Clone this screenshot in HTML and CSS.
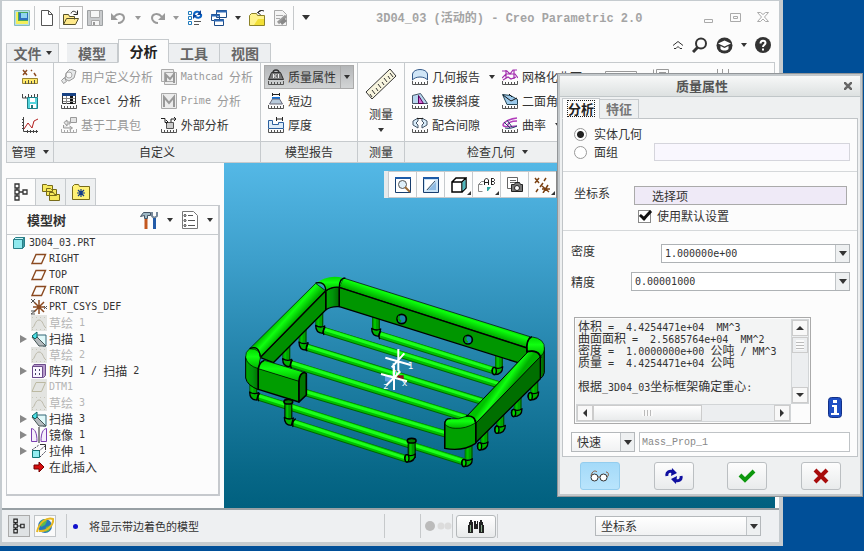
FILE: index.html
```html
<!DOCTYPE html>
<html lang="zh-CN">
<head>
<meta charset="utf-8">
<title>3D04_03 (活动的) - Creo Parametric 2.0</title>
<link rel="stylesheet" href="styles.css">
</head>
<body>
<svg class="sprite" aria-hidden="true">
  <symbol id="i-app" viewBox="0 0 16 16"><path fill="#b5dde9" stroke="#8bb" d="M.5.5h15v15H.5z"/><path fill="#f3ef5a" d="M2 2h4v8h8v4H2z"/><path fill="#4aa85a" d="M4 2h10v9H4z"/><path fill="#2f6fc0" d="M5 3h9v7H5z"/><path fill="#8fd4ee" d="M7 3h6v5H7z"/></symbol>
  <symbol id="i-new" viewBox="0 0 16 16"><path fill="#fff" stroke="#555" d="M2.500.5h7l4 4v11h-11zM9.500.5v4h4"/></symbol>
  <symbol id="i-open" viewBox="0 0 16 16"><path fill="#ffe98a" stroke="#55502a" d="M.5 14.500v-10h5l1 2h5v3M.5 14.500l3-6h12l-3 6z"/><path fill="none" stroke="#222" d="M8 3.500c1-3 4-3 6 0M14.500.5v4h-4"/></symbol>
  <symbol id="i-save" viewBox="0 0 16 16"><path fill="#c9cbcd" stroke="#9da0a2" d="M.5.5h15v15H.5z"/><path fill="#f6f6f6" stroke="#aaa" d="M3.500.5h9v7h-9zM4.500 10.500h8v5h-8z"/><path fill="#999" d="M6 12h2v3H6z"/></symbol>
  <symbol id="i-undo" viewBox="0 0 16 16"><path fill="none" stroke="#9a9a9a" stroke-width="2" d="M3 7c4-5 10-3 10 1 0 3-3 5-6 5"/><path fill="#9a9a9a" d="M0 3v7h7z"/></symbol>
  <symbol id="i-regen" viewBox="0 0 16 16"><path fill="none" stroke="#1f7bbd" d="M1.500 1.500h3v3h-3zM1.500 6.500h3v3h-3zM1.500 11.500h3v3h-3z"/><path fill="none" stroke="#0b63c4" stroke-width="2" d="M7 5c0-4 5-4 6-2M14 4c1 4-4 5-6 2"/><path fill="#0b3f94" d="M14 0v5h-4zM6 9V5h4z"/><path stroke="#555" d="M7 11.500h7M7 14.500h5"/></symbol>
  <symbol id="i-wins" viewBox="0 0 16 16"><path fill="#fff" stroke="#1d4b86" d="M5.500.5h10v7h-10zM.5 4.500h8v6h-8zM3.500 9.500h9v6h-9z"/><path stroke="#2c68b4" stroke-width="2" d="M5 1.500h11M0 5.500h9M3 10.500h10"/></symbol>
  <symbol id="i-fold" viewBox="0 0 16 16"><path fill="#fff38c" stroke="#8c8228" d="M.5 15.500V5.500l2-2h5l1 2h7v10z"/><path fill="#f2df36" d="M9 9h6v6H5z"/><path fill="none" stroke="#222" d="M9 3c1-3 3-3 6-2M12.500.5l-4 2 3 2"/></symbol>
  <symbol id="i-edit" viewBox="0 0 16 16"><path fill="#f4f4f4" stroke="#aaa" d="M1.500.5h8l4 4v11h-12z"/><path stroke="#aaa" d="M3 5.500h7M3 8.500h4"/><path stroke="#999" stroke-width="3" d="M5 13l8-7"/><path fill="#888" d="M7 12l4-4 3 3-5 4z"/></symbol>
  <symbol id="i-scale" viewBox="0 0 16 16"><path stroke="#8b4a20" stroke-width="1.500" d="M1 1l4 5M5 1L1 6M9 1l1 1M12 4l2 3"/><path fill="#ffe96a" stroke="#9a8430" d="M.5 9.500h15v5H.5z"/><path stroke="#554" d="M3.500 12v3M6.500 11v4M9.500 12v3M12.500 11v4"/></symbol>
  <symbol id="i-savea" viewBox="0 0 16 16"><path fill="none" stroke="#444" d="M.5 1v4h5M3.500 3v2"/><path stroke="#444" d="M6.500 1v3M9.500 2v2M12.500 1v3M15.500 1v3"/><path fill="#55d5dd" stroke="#1d7e86" d="M5.500 4.500h10v11h-10z"/><path fill="#fff" d="M8 5h5v4H8zM8 11h6v4H8z"/><path fill="#277" d="M9 12h2v3H9z"/></symbol>
  <symbol id="i-graph" viewBox="0 0 16 16"><path fill="none" stroke="#444" d="M1.500 0v14.500H16M0 2.500h2M0 5.500h2M0 8.500h2M0 11.500h2M5.500 13v3M8.500 13v3M11.500 13v3M14.500 13v3"/><path fill="none" stroke="#b21e1e" d="M2 12l4-6 4 5 2-7 4-2"/></symbol>
  <symbol id="ruler" viewBox="0 0 16 16"><path fill="none" stroke="currentColor" d="M.5 12v3.500h15V12M3.500 13v2M6.500 13v2M9.500 13v2M12.500 13v2"/></symbol>
  <symbol id="i-user" viewBox="0 0 16 16"><path fill="#e6e8e9" stroke="#999" d="M5 4l4-4 6 2-2 7-5 3-4-2zM.5 11.500l3-3 2 4-3 2z"/><circle cx="8" cy="6" r="3" fill="#f7f7f7" stroke="#aaa"/></symbol>
  <symbol id="i-excel" viewBox="0 0 16 16"><path fill="#fff" stroke="#333" d="M1.500.5h13v10h-13z"/><path fill="#174184" d="M1 0h14v3H1z"/><path fill="#111" d="M9 3h3v8H9z"/><path stroke="#888" d="M2 5.500h12M2 8.500h12M5.500 3v8"/><use href="#ruler"/></symbol>
  <symbol id="i-kit" viewBox="0 0 16 16"><path fill="#e4e4e4" stroke="#999" d="M9.500.5h6v5h-6zM3 5.500L6 3v2h3v2H6v2zM2.500 8v3h8M8.500 9l3 2-3 2"/><use href="#ruler"/></symbol>
  <symbol id="i-mcad" viewBox="0 0 16 16"><path fill="#ececec" stroke="#aaa" d="M.5.5h12v12H.5zM3.500 3.500h12v12h-12z"/><path fill="none" stroke="#999" stroke-width="2" d="M5 13V6l4 4 4-5v9"/></symbol>
  <symbol id="i-prime" viewBox="0 0 16 16"><path fill="#ececec" stroke="#aaa" d="M.5.5h15v15H.5z"/><path fill="none" stroke="#999" stroke-width="2" d="M3 14V4l5 6 5-6v10"/></symbol>
  <symbol id="i-ext" viewBox="0 0 16 16"><path fill="#ccc" stroke="#555" d="M5.500 5.500h7v6h-7z"/><path fill="none" stroke="#222" d="M0 1.500h4v4h3M5 3l2 2-2 2M10 5V2h5M13 0l2 2-2 2"/><use href="#ruler"/></symbol>
  <symbol id="i-mass" viewBox="0 0 16 16"><path fill="none" stroke="#333" stroke-width="1.500" d="M5 4c0-4 6-4 6 0"/><path fill="#777" stroke="#333" d="M3.500 3.500h9l3 7H.5z"/><path fill="none" stroke="#eee" d="M5.500 5v4M8.500 5L6.500 7l2 2M10.500 5v4"/><use href="#ruler"/></symbol>
  <symbol id="i-short" viewBox="0 0 16 16"><path stroke="#222" d="M4.500 0v3M11.500 0v3M5 1.500h6"/><path stroke="#1471d8" stroke-width="2" d="M4 5h8"/><path fill="#b9cbdc" stroke="#667" d="M4.500 6h7l3 5H1.500z"/><use href="#ruler"/></symbol>
  <symbol id="i-thick" viewBox="0 0 16 16"><path stroke="#222" d="M8.500 0v4M14.500 0v4M9 2h5"/><path fill="#dcebf8" stroke="#2b5f9e" d="M.5 3.500h4v4h6v-2h5v6H.5z"/><use href="#ruler"/></symbol>
  <symbol id="i-measure" viewBox="0 0 32 32"><path fill="#f8f5df" stroke="#333" d="M1 24L25 1l6 7L7 31z"/><path stroke="#333" d="M7 29l-2-3M10 26l-3-4M13 23l-2-3M16 20l-3-4M19 17l-2-3M22 14l-3-4M25 11l-2-3M28 9l-3-4"/></symbol>
  <symbol id="i-geo" viewBox="0 0 16 16"><path fill="#cfe5f7" stroke="#345a8a" d="M.5 11V5c1-6 14-6 15 0v6c-3-4-12-4-15 0z"/><use href="#ruler"/></symbol>
  <symbol id="i-draft" viewBox="0 0 16 16"><path fill="#b8d6ee" stroke="#456" d="M.5 10.500v-8l8-2 7 10z"/><path fill="#d46bd4" stroke="#505" d="M6.500 10.500v-8l5 8z"/><use href="#ruler"/></symbol>
  <symbol id="i-fit" viewBox="0 0 16 16"><path fill="#d8ebf8" stroke="#456" d="M6 1L1 4v4l5 3V8L4 6l2-2zM10 1l5 3v4l-5 3V8l2-2-2-2z"/><path stroke="#222" d="M5 1.500h6"/><use href="#ruler"/></symbol>
  <symbol id="i-mesh" viewBox="0 0 16 16"><path fill="none" stroke="#a22bad" stroke-width="1.200" d="M0 2h5l3 3 3-4h4M0 9l4-4h9l3 4M4 1v9M12 1v9M1 11l5-3 3 2 5-2"/><use href="#ruler"/></symbol>
  <symbol id="i-dihed" viewBox="0 0 16 16"><path fill="#9cc9ea" stroke="#245" d="M.5 1.500l8 1 7 4v5H5z"/><path fill="none" stroke="#111" d="M1 2l8 6 6-3M7 1l3 3"/><use href="#ruler"/></symbol>
  <symbol id="i-curv" viewBox="0 0 16 16"><path fill="none" stroke="#b23dbb" stroke-width="1.500" d="M15 1C6 2 1 6 1 8s5 2 14 1M15 4C9 4 5 6 6 9"/><path fill="none" stroke="#246" d="M2 5l6 6M5 3l5 7M3 11c4 1 8 0 12-2"/><use href="#ruler"/></symbol>
  <symbol id="i-zoom" viewBox="0 0 16 16"><path fill="#fff" stroke="#173d6e" d="M.5.5h15v15H.5z"/><path fill="#1c5aa8" d="M0 0h16v2H0z"/><circle cx="7.500" cy="7.500" r="4" fill="#dff0fa" stroke="#555"/><path stroke="#9a6a34" stroke-width="2" d="M10 10l5 5"/></symbol>
  <symbol id="i-repaint" viewBox="0 0 16 16"><path fill="#c9e2f6" stroke="#173d6e" d="M.5.5h15v15H.5z"/><path fill="#1c5aa8" d="M0 0h16v2H0z"/><path fill="#fff" d="M2 3h10L2 14z"/><path fill="#8fbbe4" d="M13 5v8H5z"/><path stroke="#456" d="M4 13l8-9"/></symbol>
  <symbol id="i-cube" viewBox="0 0 16 16"><path fill="#fff" stroke="#000" stroke-width="1.500" d="M1 5h10v10H1zM1 5l4-4h10l-4 4M15 1v10l-4 4"/><path fill="#4fb7bd" d="M11.500 5.500L14.500 2.500V11l-3 3z"/></symbol>
  <symbol id="i-views" viewBox="0 0 18 16"><path fill="#fff" stroke="#888" d="M.5 14.500v-7l3-3h3M.5 7.500h4M.5 14.500h4"/><path fill="#2aa59d" d="M9 10h4l-3 4H9z"/><path fill="none" stroke="#222" d="M6.500 8V3l2-2 2 2v5M7 5.500h3M13.500 1v7M13.500 1.500h2l1 1v1l-1 1h-2M13.500 4.500h2l1 1v1l-1 1h-2"/></symbol>
  <symbol id="i-cam" viewBox="0 0 16 16"><path fill="#fff" stroke="#666" d="M.5.5h10v11H.5zM3 3.500h6M3 5.500h6"/><path fill="#777" stroke="#222" d="M4.500 7.500h3l1-2h4l1 2h2v7h-11z"/><circle cx="10" cy="11" r="2.500" fill="#fff" stroke="#222"/></symbol>
  <symbol id="i-dat" viewBox="0 0 17 16"><path stroke="#7a4012" stroke-width="1.500" d="M1 1l4 5M5 1L1 6M12 1l-2 3M9 6L6 10M4 12l-2 3M8 9l7 6M14 8l-5 8M8 12h8"/></symbol>
  <symbol id="i-tree" viewBox="0 0 14 18"><path fill="none" stroke="currentColor" stroke-width="1.300" d="M1 1h4v4H1zM1 13h4v4H1zM1 7h4v4H1zM9 7h4v4H9zM3 5v2M3 11v2M5 9h4"/></symbol>
  <symbol id="i-folds" viewBox="0 0 18 18"><g fill="#f7e95c" stroke="#776b1a"><path d="M.5 8.500v-7h4l1 1h5v6zM4.500 12.500v-7h4l1 1h5v6zM7.500 17.500v-8h4l1 2h5v6z"/></g></symbol>
  <symbol id="i-fav" viewBox="0 0 18 16"><path fill="#fff176" stroke="#776b1a" d="M.5 15.500V2.500l2-2h4l1 2h10v13z"/><path stroke="#113a8a" stroke-width="1.200" d="M9 5v8M5 9h8M6 6l6 6M12 6l-6 6"/></symbol>
  <symbol id="i-tools" viewBox="0 0 18 18"><path fill="#9fb8c4" stroke="#456" d="M.5 5.500l3-4h7v3h-3v3h-3v-3z"/><path stroke="#c45820" stroke-width="3" d="M6 8v10"/><path fill="none" stroke="#789" stroke-width="2" d="M12 1v4l2 2 3-2V1"/><path stroke="#235ba8" stroke-width="3" d="M14.500 7v11"/></symbol>
  <symbol id="i-list" viewBox="0 0 16 18"><path fill="#fff" stroke="#777" d="M.5.5h11l4 4v13H.5z"/><path stroke="#555" d="M6 4.500h5M6 9.500h7M6 14.500h7"/><g fill="none" stroke="#333"><circle cx="3" cy="4.500" r="1"/><circle cx="3" cy="9.500" r="1"/><circle cx="3" cy="14.500" r="1"/></g></symbol>
  <symbol id="t-part" viewBox="0 0 16 16"><path fill="#8fe9ee" stroke="#2a7f88" d="M2.500 4.500h9v9h-9z"/><path fill="#c9f7f9" stroke="#2a7f88" d="M2.500 4.500l2-2h9l-2 2z"/><path fill="#3a9ba3" stroke="#2a7f88" d="M11.500 4.500l2-2v9l-2 2z"/></symbol>
  <symbol id="t-plane" viewBox="0 0 16 16"><path fill="none" stroke="#8b4a20" stroke-width="1.400" d="M5 3.500h9.500l-4 9H1z"/></symbol>
  <symbol id="t-csys" viewBox="0 0 16 16"><path stroke="#8b4a20" stroke-width="1.500" d="M8 1v14M2 8h12M3 3l10 10M13 3L3 13"/><path fill="none" stroke="#555" d="M0 0l4 4M4 0L0 4M13 7l3 3M16 7l-3 3M0 12h4l-4 3h4"/></symbol>
  <symbol id="t-sketch" viewBox="0 0 16 16"><path fill="#e3e4e1" d="M0 0h16v16H0z"/><path fill="none" stroke="#bcb9aa" d="M1 13c3-1 3-8 7-8s4 6 7 8"/><path stroke="#c9c7bc" stroke-dasharray="1 3" d="M1 2.500h14M1 14.500h14"/></symbol>
  <symbol id="t-gplane" viewBox="0 0 16 16"><path fill="#e3e4e1" d="M0 0h16v16H0z"/><path fill="none" stroke="#bcb9a2" d="M5 3.500h9.500l-4 9H1z"/></symbol>
  <symbol id="t-sweep" viewBox="0 0 16 16"><path fill="#dff8f9" stroke="#367" d="M5 4h10v11h-3z"/><path fill="#b4babd" stroke="#455" d="M1 6l4-1 10 10H8z"/><path fill="#4edfe6" stroke="#166" d="M1 5l5-4v5l-2 2z"/></symbol>
  <symbol id="t-pattern" viewBox="0 0 16 16"><path fill="#b79acb" stroke="#6c4c8c" d="M3 1.500h11.500v11l-2 2h-11v-11z"/><path fill="#faf6ff" stroke="#6c4c8c" d="M1.500 3.500h10v11h-10z"/><path fill="#446" d="M4 6h1v2H4zM8 6h1v2H8zM4 10h1v2H4zM8 10h1v2H8z"/></symbol>
  <symbol id="t-mirror" viewBox="0 0 16 16"><path stroke="#222" d="M8 0v16"/><path fill="#f5effb" stroke="#7b3fb0" d="M.5 14.500V1.500C4 2 6 6 6 14.500zM15.500 14.500V1.500C12 2 10 6 10 14.500z"/></symbol>
  <symbol id="t-extr" viewBox="0 0 16 16"><path fill="#93edf0" stroke="#177" d="M1.500 7.500h7v7h-7z"/><path fill="none" stroke="#445" stroke-dasharray="2 1" d="M1 7l7-5M8 8l6-5M9 14l6-6"/><path fill="none" stroke="#333" d="M9 1.500h5.500V7"/></symbol>
  <symbol id="t-arrow" viewBox="0 0 16 16"><path fill="#d40f0f" stroke="#700" d="M3 6h5V3l5 5-5 5v-3H3z"/></symbol>
  <symbol id="i-web" viewBox="0 0 18 18"><circle cx="9" cy="9" r="7" fill="#2878ba"/><path fill="#5dbb4b" d="M4 5l4-3 3 2-2 4-4 2zM10 10l5-2-2 6-4 1z"/><path fill="none" stroke="#e5b823" stroke-width="2" d="M1 15C3 5 11 0 17 2c1 5-5 13-14 12"/></symbol>
</svg>

<main class="window">
  <header class="titlebar">
    <button class="tb"><svg class="ic"><use href="#i-app"/></svg></button><i class="rule"></i>
    <button class="tb"><svg class="ic"><use href="#i-new"/></svg></button>
    <button class="tb framed"><svg class="ic"><use href="#i-open"/></svg></button>
    <button class="tb"><svg class="ic"><use href="#i-save"/></svg></button>
    <button class="tb"><svg class="ic"><use href="#i-undo"/></svg></button><i class="slot"><i class="caret dim"></i></i>
    <button class="tb"><svg class="ic flip"><use href="#i-undo"/></svg></button><i class="slot"><i class="caret dim"></i></i>
    <button class="tb"><svg class="ic"><use href="#i-regen"/></svg></button>
    <button class="tb"><svg class="ic"><use href="#i-wins"/></svg></button><i class="slot"><i class="caret"></i></i>
    <button class="tb"><svg class="ic"><use href="#i-fold"/></svg></button>
    <button class="tb"><svg class="ic"><use href="#i-edit"/></svg></button><i class="rule"></i>
    <i class="slot wide"><i class="caret big-caret"></i></i>
    <h1 class="title">3D04_03 (<span class="cjk">活动的</span>) - Creo Parametric 2.0</h1>
    <div class="winbtns">
      <button><svg width="12" height="12"><path fill="none" stroke="#aaa" d="M1.500 7.500h8v3h-8z"/></svg></button>
      <button><svg width="12" height="12"><path fill="none" stroke="#aaa" d="M.5 1.500h10v8H.5zM3.500 4.500h4v2h-4z"/></svg></button>
      <button><svg width="12" height="12"><path fill="none" stroke="#aaa" d="M.5.5h3l2.500 2 2.500-2h3L7.500 5l4 4.500h-3L6 7 3.500 9.500h-3l4-4.500z"/></svg></button>
    </div>
  </header>

  <nav class="tabs">
    <button class="tab file">文件<i class="caret"></i></button>
    <button class="tab">模型</button><button class="tab on">分析</button><button class="tab">工具</button><button class="tab">视图</button>
    <div class="help">
      <button><svg width="12" height="8"><path fill="none" stroke="#333" d="M1 4.500l5-4 5 4M2 7.500h2l2-2 2 2h2"/></svg></button>
      <button><svg width="16" height="16"><circle cx="9" cy="6.500" r="5" fill="none" stroke="#333" stroke-width="2"/><path stroke="#333" stroke-width="3" d="M5.500 10.500L1 15"/></svg></button>
      <button><svg width="17" height="17"><circle cx="8.500" cy="8.500" r="8" fill="#333"/><path fill="#fff" d="M2 6.500l6.500-3 6.500 3-6.500 3zM4.500 9l4 2 4-2v3c-2 2-6 2-8 0z"/></svg></button>
      <i class="caret"></i>
      <button><svg width="16" height="16"><circle cx="8" cy="8" r="8" fill="#333"/><path fill="none" stroke="#fff" stroke-width="2" d="M5.500 6.500c0-4 5-3.500 5-.5 0 1.500-2.500 2-2.500 4M8 11.500v2"/></svg></button>
    </div>
  </nav>

  <section class="ribbon">
    <div class="group g1">
      <div class="cmds"><div class="col">
        <button class="cmd"><svg class="ic"><use href="#i-scale"/></svg></button>
        <button class="cmd"><svg class="ic"><use href="#i-savea"/></svg></button>
        <button class="cmd"><svg class="ic"><use href="#i-graph"/></svg></button>
      </div></div>
      <div class="cap">管理<i class="caret"></i></div>
    </div>
    <div class="group g2">
      <div class="cmds">
        <div class="col c100">
          <button class="cmd off"><svg class="ic"><use href="#i-user"/></svg>用户定义分析</button>
          <button class="cmd"><svg class="ic"><use href="#i-excel"/></svg><span class="m">Excel </span>分析</button>
          <button class="cmd off"><svg class="ic"><use href="#i-kit"/></svg>基于工具包</button>
        </div>
        <div class="col">
          <button class="cmd off"><svg class="ic"><use href="#i-mcad"/></svg><span class="m">Mathcad </span>分析</button>
          <button class="cmd off"><svg class="ic"><use href="#i-prime"/></svg><span class="m">Prime </span>分析</button>
          <button class="cmd"><svg class="ic"><use href="#i-ext"/></svg>外部分析</button>
        </div>
      </div>
      <div class="cap">自定义</div>
    </div>
    <div class="group g3">
      <div class="cmds"><div class="col">
        <button class="cmd pressed"><svg class="ic"><use href="#i-mass"/></svg>质量属性<i class="split"><i class="caret"></i></i></button>
        <button class="cmd"><svg class="ic"><use href="#i-short"/></svg>短边</button>
        <button class="cmd"><svg class="ic"><use href="#i-thick"/></svg>厚度</button>
      </div></div>
      <div class="cap">模型报告</div>
    </div>
    <div class="group g4">
      <div class="cmds"><button class="big"><svg width="32" height="32"><use href="#i-measure"/></svg>测量<i class="caret"></i></button></div>
      <div class="cap">测量</div>
    </div>
    <div class="group g5">
      <div class="cmds">
        <div class="col c90">
          <button class="cmd"><svg class="ic"><use href="#i-geo"/></svg>几何报告<i class="caret far"></i></button>
          <button class="cmd"><svg class="ic"><use href="#i-draft"/></svg>拔模斜度</button>
          <button class="cmd"><svg class="ic"><use href="#i-fit"/></svg>配合间隙</button>
        </div>
        <div class="col c90">
          <button class="cmd"><svg class="ic"><use href="#i-mesh"/></svg>网格化曲面</button>
          <button class="cmd"><svg class="ic"><use href="#i-dihed"/></svg>二面角</button>
          <button class="cmd"><svg class="ic"><use href="#i-curv"/></svg>曲率<i class="caret far"></i></button>
        </div>
        <svg class="peek" width="130" height="12"><path fill="none" stroke="#999" d="M3.500 12V6.500h31V12M51.500 12V4.500M54.500 12V4.500h12V12M57 7.500h7M115.500 4v8M120.500 4v8M126.500 4v8"/></svg>
      </div>
      <div class="cap left">检查几何<i class="caret"></i></div>
    </div>
  </section>

  <section class="work">
    <aside class="side">
      <div class="stabs">
        <button class="on"><svg width="14" height="18"><use href="#i-tree"/></svg></button>
        <button><svg width="18" height="18"><use href="#i-folds"/></svg></button>
        <button><svg width="18" height="16"><use href="#i-fav"/></svg></button>
      </div>
      <div class="panel">
        <div class="phead"><h2>模型树</h2>
          <svg width="18" height="18"><use href="#i-tools"/></svg><i class="caret"></i>
          <svg width="16" height="18"><use href="#i-list"/></svg><i class="caret"></i>
        </div>
        <ul class="tree">
          <li class="root"><svg class="ic"><use href="#t-part"/></svg><span class="m">3D04_03.PRT</span></li>
          <li><svg class="ic"><use href="#t-plane"/></svg><span class="m">RIGHT</span></li>
          <li><svg class="ic"><use href="#t-plane"/></svg><span class="m">TOP</span></li>
          <li><svg class="ic"><use href="#t-plane"/></svg><span class="m">FRONT</span></li>
          <li><svg class="ic"><use href="#t-csys"/></svg><span class="m">PRT_CSYS_DEF</span></li>
          <li class="off"><svg class="ic"><use href="#t-sketch"/></svg>草绘<span class="m"> 1</span></li>
          <li class="exp"><svg class="ic"><use href="#t-sweep"/></svg>扫描<span class="m"> 1</span></li>
          <li class="off"><svg class="ic"><use href="#t-sketch"/></svg>草绘<span class="m"> 2</span></li>
          <li class="exp"><svg class="ic"><use href="#t-pattern"/></svg>阵列<span class="m"> 1 / </span>扫描<span class="m"> 2</span></li>
          <li class="off"><svg class="ic"><use href="#t-gplane"/></svg><span class="m">DTM1</span></li>
          <li class="off"><svg class="ic"><use href="#t-sketch"/></svg>草绘<span class="m"> 3</span></li>
          <li class="exp"><svg class="ic"><use href="#t-sweep"/></svg>扫描<span class="m"> 3</span></li>
          <li class="exp"><svg class="ic"><use href="#t-mirror"/></svg>镜像<span class="m"> 1</span></li>
          <li class="exp"><svg class="ic"><use href="#t-extr"/></svg>拉伸<span class="m"> 1</span></li>
          <li><svg class="ic"><use href="#t-arrow"/></svg>在此插入</li>
        </ul>
      </div>
    </aside>
    <div class="view">
      <svg class="model" viewBox="0 0 551 346" preserveAspectRatio="xMinYMin meet">
        <defs>
          <linearGradient id="rail" gradientUnits="userSpaceOnUse" x1="640" y1="135" x2="628" y2="172"><stop offset="0" stop-color="#00c800"/><stop offset=".35" stop-color="#0cff0c"/><stop offset="1" stop-color="#00a800"/></linearGradient>
          <linearGradient id="railL" gradientUnits="userSpaceOnUse" x1="172" y1="165" x2="202" y2="192"><stop offset="0" stop-color="#00c400"/><stop offset=".4" stop-color="#10ff10"/><stop offset="1" stop-color="#00b000"/></linearGradient>
          <linearGradient id="railR" gradientUnits="userSpaceOnUse" x1="818" y1="370" x2="850" y2="392"><stop offset="0" stop-color="#00c400"/><stop offset=".45" stop-color="#10ff10"/><stop offset="1" stop-color="#00b000"/></linearGradient>
          <linearGradient id="bend" x1="0" y1="0" x2="1" y2="0"><stop offset="0" stop-color="#00a800"/><stop offset=".5" stop-color="#00940a"/><stop offset="1" stop-color="#006a00"/></linearGradient>
          <linearGradient id="cap" x1="0" y1="0" x2="0" y2="1"><stop offset="0" stop-color="#00d800"/><stop offset=".4" stop-color="#10ff10"/><stop offset="1" stop-color="#00b400"/></linearGradient>
          <g id="post"><path stroke="#005a00" stroke-width="24" d="M0-48V-6"/><path stroke="#00a400" stroke-width="18" d="M-1-48V-6"/><path stroke="#00c400" stroke-width="6" d="M-3-48V-6"/></g>
          <g id="elbow"><path fill="#00b400" stroke="#000" stroke-width="4" d="M-13-10c0 16 8 24 21 24l6-22c-8 4-18 4-27-2z"/></g>
          <g id="elbowR"><path fill="#00b400" stroke="#000" stroke-width="4" d="M13-10c0 16-10 24-26 24-8-6-8-18 0-22 8 4 18 4 26-2z"/><ellipse cx="-12" cy="3" rx="6" ry="11" fill="#00d800" stroke="#000" stroke-width="4"/></g>
        </defs>
        <g transform="translate(1 97) scale(.33333)" fill="none" stroke-linejoin="round">
          <use href="#post" x="453" y="215"/><use href="#post" x="283" y="206"/><use href="#post" x="233" y="254"/><use href="#post" x="184" y="306"/><use href="#post" x="822" y="330"/>
          <use href="#post" x="928" y="406"/><use href="#post" x="878" y="458"/><use href="#post" x="826" y="506"/><use href="#post" x="778" y="554"/><use href="#post" x="731" y="604"/><use href="#post" x="85" y="406"/>
          <path stroke="#006400" stroke-width="22" d="M465 225L808 332M298 212L840 380M245 262L790 430M198 312L730 476M235 396L670 524M100 411L718 606M205 488L548 598"/>
          <path stroke="#00c000" stroke-width="18" d="M465 224L808 331M298 211L840 379M245 261L790 429M198 311L730 475M235 395L670 523M100 410L718 605M205 487L548 597"/>
          <path stroke="#1cff1c" stroke-width="9" d="M467 222L806 328M300 209L840 377M247 259L790 427M200 309L730 473M235 393L670 521M102 408L716 603M207 485L546 595"/>
          <use href="#elbow" x="453" y="215"/><use href="#elbow" x="285" y="206"/><use href="#elbow" x="235" y="256"/><use href="#elbow" x="186" y="306"/><use href="#elbow" x="87" y="406"/>
          <use href="#elbowR" x="820" y="330"/><use href="#elbowR" x="928" y="406"/><use href="#elbowR" x="878" y="456"/><use href="#elbowR" x="828" y="506"/><use href="#elbowR" x="776" y="556"/><use href="#elbowR" x="729" y="606"/>
          <path stroke="#000" stroke-width="4" d="M468 214q-10 8-4 24M301 201q-10 8-4 24M250 250q-10 8-4 24M203 301q-10 8-4 24M105 400q-10 8-4 24"/>
          <path fill="#009600" stroke="#000" stroke-width="4" d="M343 80L906 262V285L886 310 343 140z"/>
          <path fill="url(#bend)" stroke="#000" stroke-width="4" d="M302 92q20-14 41-12v60q-25-2-41 10z"/>
          <path fill="#009000" stroke="#000" stroke-width="4" d="M302 92v58L145 308 105 292z"/>
          <path fill="url(#rail)" stroke="#000" stroke-width="2" d="M355 54L915 230 906 263 343 82z"/>
          <path fill="url(#railL)" stroke="#000" stroke-width="2" d="M272 70L74 266 104 296 302 92z"/>
          <path fill="url(#cap)" d="M272 70q38-28 83-16l-12 28q-22-4-41 10-2-24-30-22z"/>
          <path stroke="#000" stroke-width="4" d="M272 69q30-6 30 24 20-14 41-11V140M343 82q0-28 18-28M302 92v58M343 82L906 264M302 92L104 294"/>
          <path fill="url(#bend)" stroke="#000" stroke-width="3" d="M62 290v64q4 22 38 35V325l4-28q-30 4-42-7z"/>
          <path fill="url(#cap)" stroke="#000" stroke-width="2" d="M74 266q-14 10-12 26 4 24 38 34l6-32q2-28-32-28z"/>
          <path fill="#009d00" stroke="#000" stroke-width="4" d="M100 324L222 362V426L100 388z"/>
          <path fill="url(#cap)" stroke="#000" stroke-width="2" d="M118 301L238 337 222 364 100 326q4-18 18-25z"/>
          <path fill="#007800" stroke="#000" stroke-width="5" d="M222 362q2-22 16-25l6 4v64l-22 21z"/>
          <path stroke="#000" stroke-width="4" d="M74 266q28-12 32 24M118 301q-18 6-18 30v57"/>
          <g stroke="#000" stroke-width="5"><circle cx="530" cy="177" r="14" fill="#1c86a8"/><path stroke="#00a800" stroke-width="6" d="M523 168q-6 10 5 17"/><circle cx="729" cy="239" r="13" fill="#1c86a8"/><path stroke="#00a800" stroke-width="6" d="M723 230q-6 10 5 17"/></g>
          <path fill="url(#bend)" stroke="#000" stroke-width="3" d="M912 262q30 18 46 0v76q-2 12-14 20l-32 20z"/>
          <path fill="#006f00" stroke="#000" stroke-width="4" d="M752 488L946 284V356L752 548z"/>
          <path fill="url(#railR)" stroke="#000" stroke-width="3" d="M912 272L724 470 752 490 946 290q0-18-34-18z"/>
          <path fill="url(#cap)" stroke="#000" stroke-width="2" d="M918 230q44 6 40 38 0 12-12 22-4-22-40-16-4-30 12-44z"/>
          <path stroke="#000" stroke-width="5" d="M920 230q-18 8-14 45 34-8 42 18"/>
          <path fill="#00a000" stroke="#000" stroke-width="4" d="M659 490q40 22 93-8v68q-40 26-93 15z"/>
          <path fill="url(#cap)" stroke="#000" stroke-width="2" d="M659 492q0-20 20-16 20 4 44-7 24-4 28 20-30 18-60 16-20 0-32-13z"/>
          <path stroke="#000" stroke-width="4" d="M723 468q30-4 29 26v56M659 565v-70q0-20 18-19"/>
          <path stroke="#000" stroke-width="24" d="M190 424v54M560 542v52"/><path stroke="#009800" stroke-width="18" d="M190 424v54M560 542v52"/><path stroke="#00c400" stroke-width="6" d="M187 424v54M557 542v52"/>
          <use href="#elbow" x="191" y="482"/><path stroke="#000" stroke-width="4" d="M212 476q-12 8-8 25"/><use href="#elbowR" x="558" y="592"/>
          <g fill="#008000" stroke="#000" stroke-width="5"><ellipse cx="190" cy="425" rx="13" ry="7"/><ellipse cx="560" cy="542" rx="13" ry="7"/></g>
          <path fill="#5b9fe0" d="M480 348l20-4v22l-20-2z"/><path fill="#8b1022" d="M516 346h20v14h-18z"/>
          <path stroke="#fff" stroke-width="6" d="M520 267v66M481 293l76 22M538 280l-38 42M507 318v72M468 342l78 22M526 334l-42 42M506 310v40"/>
          <g fill="#fff" class="axes"><text x="548" y="328">1</text><text x="530" y="378">x</text><text x="508" y="344">y</text><text x="474" y="388">z</text></g>
        </g>
      </svg>
      <div class="gtool">
        <button><svg width="16" height="16"><use href="#i-zoom"/></svg></button>
        <button><svg width="16" height="16"><use href="#i-repaint"/></svg></button>
        <button class="more"><svg width="16" height="16"><use href="#i-cube"/></svg></button>
        <button class="more"><svg width="18" height="16"><use href="#i-views"/></svg></button>
        <button><svg width="16" height="16"><use href="#i-cam"/></svg></button>
        <button class="more"><svg width="17" height="16"><use href="#i-dat"/></svg></button>
        <button class="sel"></button>
      </div>
    </div>
  </section>

  <footer class="status">
    <button class="sb down"><svg width="12" height="16"><use href="#i-tree"/></svg></button>
    <button class="sb"><svg width="18" height="18"><use href="#i-web"/></svg></button>
    <i class="rule"></i><i class="dot"></i><span class="msg">将显示带边着色的模型</span>
    <i class="rule"></i><i class="gap"></i><i class="rule"></i>
    <svg width="31" height="12"><circle cx="9" cy="6" r="5" fill="#bbb"/><circle cx="20" cy="6" r="3.500" fill="#dcdcdc"/><circle cx="27" cy="6" r="3.500" fill="#dcdcdc"/></svg>
    <i class="rule"></i>
    <button class="find"><svg width="16" height="14"><path fill="#222" d="M2 1h2v2h1v11H0V6h1V3h1zM12 1h2v2h1v3h1v8h-5V3h1zM6 2h2v3h1V2h1v8H6z"/><path fill="#8a8" d="M2 6h1v7H2zM13 6h1v7h-1z"/></svg></button>
    <i class="rule"></i>
    <label class="pick filter"><select aria-label="选择过滤器"><option>坐标系</option></select><span class="drop"><i class="caret"></i></span></label>
  </footer>
</main>

<section class="dialog" role="dialog" aria-labelledby="dt">
  <header class="dtitle"><h2 id="dt">质量属性</h2><button class="x" aria-label="关闭"><svg width="8" height="8"><path stroke="#666" stroke-width="2.500" d="M0 0l8 8M8 0L0 8"/></svg></button></header>
  <div class="dtabs"><button class="on"><span>分析</span></button><button>特征</button></div>
  <div class="dbody">
    <div class="sec geo">
      <label class="radio"><input type="radio" name="geo" checked>实体几何</label>
      <div class="line"><label class="radio"><input type="radio" name="geo">面组</label><input class="quilt" type="text" aria-label="面组"></div>
    </div>
    <div class="sec cs">
      <div class="line"><label for="cs">坐标系</label><input id="cs" class="csin" type="text" value="选择项"></div>
      <label class="check"><input type="checkbox" checked>使用默认设置</label>
    </div>
    <div class="sec res">
      <div class="line dens"><label for="den">密度</label><span class="combo"><input id="den" type="text" value="1.000000e+00"><button class="drop"><i class="caret"></i></button></span></div>
      <div class="line prec"><label for="acc">精度</label><span class="combo"><input id="acc" type="text" value="0.00001000"><button class="drop"><i class="caret"></i></button></span></div>
      <div class="line out">
        <div class="report">
          <pre>体积<span class="m"> =  4.4254471e+04  MM^3</span>
曲面面积<span class="m"> =  2.5685764e+04  MM^2</span>
密度<span class="m"> =  1.0000000e+00 </span>公吨<span class="m"> / MM^3</span>
质量<span class="m"> =  4.4254471e+04 </span>公吨

根据<span class="m">_3D04_03</span>坐标框架确定重心<span class="m">:</span></pre>
          <div class="vbar"><button><i class="caret up"></i></button><i class="thumb"></i><button><i class="caret"></i></button></div>
          <div class="hbar"><button><i class="caret lt"></i></button><i class="thumb"></i><button><i class="caret rt"></i></button></div>
        </div>
        <svg width="14" height="21"><rect x=".5" y=".5" width="13" height="20" rx="3" fill="#1f4fc4" stroke="#123087"/><path fill="#fff" d="M5 3h4v3H5zM4 8h5v8h2v2H3v-2h3v-6H4z"/></svg>
      </div>
      <div class="line name">
        <label class="pick"><select aria-label="分析类型"><option>快速</option></select><span class="drop"><i class="caret"></i></span></label>
        <input type="text" value="Mass_Prop_1" aria-label="分析名称">
      </div>
    </div>
  </div>
  <div class="dbtns">
    <button class="lit"><svg width="20" height="12"><g fill="#fff" stroke="#333"><circle cx="4.500" cy="7.500" r="3.500"/><circle cx="13.500" cy="7.500" r="3.500"/></g><path fill="none" stroke="#8a5a3a" d="M1 6C2 1 5 0 7 2M8 7h2M17 7c2-1 2-5-1-5"/></svg></button>
    <button><svg width="18" height="16"><path fill="none" stroke="#1010a0" stroke-width="3" d="M2 8c-1-4 3-6 6-4M16 8c1 4-3 6-6 4"/><path fill="#1010a0" d="M7 0l5 5-6 3zM11 16l-5-5 6-3z"/></svg></button>
    <button><svg width="18" height="14"><path fill="none" stroke="#0d970d" stroke-width="4" d="M2 6l5 5 9-9"/></svg></button>
    <button><svg width="16" height="16"><path stroke="#a80c0c" stroke-width="4" d="M2 2l12 12M14 2L2 14"/></svg></button>
  </div>
</section>
</body>
</html>
```
FILE: styles.css
```css
* { box-sizing: border-box; }
html, body { height: 100%; }
body {
  margin: 0; overflow: hidden; background: #004f98; color: #333;
  font: 12px/16px "Noto Sans CJK SC", sans-serif;
  display: flex; padding: 0 81px 5px 0; position: relative;
}
button, input, select { font: inherit; color: inherit; margin: 0; padding: 0; }
button { background: none; border: 0; display: flex; align-items: center; justify-content: center; white-space: nowrap; }
h1, h2, ul, pre { margin: 0; padding: 0; }
i { font-style: normal; flex: none; }
svg { display: block; flex: none; }
.sprite { position: absolute; width: 0; height: 0; }
.m { font: 10px/12px "DejaVu Sans Mono", monospace; white-space: pre; }
.ic { width: 16px; height: 16px; color: #555; }
.flip { transform: scaleX(-1); }
.caret { display: block; border: 3px solid transparent; border-top: 4px solid #333; border-bottom: 0; }
.caret.dim { border-top-color: #999; }
.caret.big-caret { border-width: 5px 4px 0; }
.caret.up { border-top: 0; border-bottom: 4px solid #333; }
.caret.lt { border: 4px solid transparent; border-left: 0; border-right-color: #333; }
.caret.rt { border: 4px solid transparent; border-right: 0; border-left-color: #333; }
.rule { width: 1px; background: #c6c9cb; align-self: stretch; }

.window {
  flex: 1; min-width: 0; display: flex; flex-direction: column;
  background: #fcfcfc; border: solid #c5cbcf; border-width: 1px 4px 4px 2px;
}

.titlebar { display: flex; align-items: center; height: 33px; padding: 0 3px 0 8px; }
.titlebar .rule { height: 24px; align-self: center; }
.tb { width: 24px; height: 23px; border: 1px solid transparent; }
.tb.framed { border-color: #bbb; }
.slot { width: 14px; display: flex; justify-content: center; }
.slot.wide { width: 24px; }
.title { flex: 1; margin-left: 58px; white-space: nowrap; font: bold 12px/16px "Liberation Mono", monospace; color: #a4a4a4; }
.title .cjk { font-family: "Noto Sans CJK SC", sans-serif; }
.winbtns { display: flex; }
.winbtns button { width: 27px; height: 20px; }

.tabs { display: flex; align-items: flex-end; height: 29px; padding: 0 3px 0 4px; position: relative; margin-bottom: -1px; }
.tab {
  width: 51px; height: 20px; background: #edeff1; color: #666; font-size: 14px; font-weight: bold;
  border: 1px solid #c6cacd; border-left-width: 0;
}
.tab.file { width: 53px; gap: 4px; border-left-width: 1px; margin-right: 8px; }
.tab.on { height: 24px; background: #fcfcfc; color: #222; border-left-width: 1px; border-bottom-color: #fcfcfc; }
.help { margin-left: auto; display: flex; align-items: center; gap: 8px; height: 36px; padding-right: 5px; }

.ribbon { display: flex; height: 101px; margin: 0 4px; border: 1px solid #c6cacd; }
.group { display: flex; flex-direction: column; border-right: 1px solid #c6cacd; flex: none; }
.g1 { width: 47px; } .g2 { width: 207px; } .g3 { width: 97px; } .g4 { width: 47px; }
.g5 { flex: 1; border-right: 0; min-width: 0; }
.cmds { flex: 1; display: flex; padding: 2px 7px 0; position: relative; }
.g1 .cmds { justify-content: center; }
.g3 .cmds { padding-left: 3px; }
.g4 .cmds { justify-content: center; padding: 5px 0 0; }
.c100 { width: 100px; } .c90 { width: 90px; }
.cmd { height: 24px; gap: 4px; justify-content: flex-start; }
.g3 .cmd { padding-left: 4px; }
.cmd .m { margin-right: -4px; }
.cmd.off { color: #999; }
.cmd.off .ic { color: #aaa; }
.cmd.pressed { width: 90px; padding-left: 3px; border: 1px solid #aaa; background: linear-gradient(#b4b6b8, #d2d4d5); }
.split { display: flex; align-items: center; align-self: stretch; padding-left: 3px; border-left: 1px solid #aaa; }
.far { margin-left: 5px; }
.big { flex-direction: column; justify-content: flex-start; gap: 6px; height: 70px; }
.peek { margin-left: 10px; }
.cap { height: 21px; background: #eef0f1; border-top: 1px solid #c6cacd; display: flex; align-items: center; justify-content: center; gap: 7px; white-space: nowrap; }
.cap.left { justify-content: flex-start; padding-left: 62px; }

.work { flex: 1; min-height: 0; display: flex; padding-right: 4px; border-bottom: 2px solid #98a0a4; }
.side { width: 222px; flex: none; display: flex; flex-direction: column; padding: 15px 4px 12px 4px; }
.stabs { display: flex; }
.stabs button { width: 30px; height: 28px; background: #eef0f1; border: 1px solid #c6cacd; border-left-width: 0; }
.stabs .on { background: #fcfcfc; border-left-width: 1px; border-bottom-color: #fcfcfc; }
.panel { flex: 1; min-height: 0; margin-top: -1px; border: solid #c6c9cd; border-width: 1px 2px 2px 1px; }
.phead { height: 29px; display: flex; align-items: center; padding: 0 5px 0 20px; gap: 9px; border-bottom: 1px solid #c6cacd; }
.phead h2 { flex: 1; font-size: 13px; line-height: 16px; }
.tree { list-style: none; }
.tree li { height: 16px; line-height: 16px; display: flex; align-items: center; padding-left: 24px; white-space: nowrap; }
.tree .ic { margin-right: 2px; }
.tree .root { padding-left: 4px; }
.tree .off { color: #b5b5b5; }
.tree .exp { padding-left: 13px; }
.tree .exp::before { content: ""; border: 4px solid transparent; border-left: 7px solid #888; border-right: 0; margin-right: 4px; }

.view { flex: 1; position: relative; overflow: hidden; background: linear-gradient(#54b8e6, #3d9fcb 28%, #2484ab 56%, #076787 90%, #00607f); }
.model { width: 551px; height: 346px; }
.axes { font: 28px "DejaVu Sans Mono", monospace; }
.gtool { position: absolute; left: 160px; top: 8px; display: flex; height: 27px; padding-left: 4px; background: #e6eaec; }
.gtool button { position: relative; width: 28px; background: #fdfdfd; border: solid #c6cacd; border-width: 1px 0 1px 1px; }
.gtool .sel { background: #ccd0d3; border-color: #888; }
.more::after { content: ""; position: absolute; right: 1px; bottom: 2px; border: 2px solid transparent; border-right-color: #333; border-bottom-color: #333; }

.status { height: 32px; flex: none; display: flex; align-items: center; background: #eef0f2; padding: 0 18px 0 6px; }
.status .rule { height: 24px; align-self: center; }
.sb { width: 22px; height: 22px; background: #fafafa; border: 1px solid #c0c4c7; margin-right: 4px; }
.sb.down { background: #dfe2e4; border-color: #aaa; color: #222; }
.sb + .rule { margin: 0 6px 0 6px; }
.dot { width: 5px; height: 5px; border-radius: 50%; background: #11c; margin-right: 11px; }
.msg { flex: 1; font-size: 11px; }
.gap { width: 35px; }
.find { width: 40px; height: 23px; margin: 0 1px 0 3px; border: 1px solid #b4b8ba; border-radius: 3px; background: linear-gradient(#fff, #e8eaeb); }
.filter { width: 166px; margin-left: 97px; }

.pick { position: relative; display: flex; height: 20px; border: 1px solid #b4b8bb; background: linear-gradient(#fff, #f1f2f3); }
.pick select { appearance: none; flex: 1; width: 100%; border: 0; background: none; padding-left: 5px; outline: 0; }
.drop { width: 14px; border-left: 1px solid #c0c4c7; background: #eef0f1; display: flex; align-items: center; justify-content: center; flex: none; }
.drop .caret { border-width: 5px 4px 0; }

.dialog {
  position: absolute; right: 1px; top: 73px; width: 306px;
  border: 3px solid #c3c8cb; outline: 1px solid #929699; outline-offset: -1px;
  background: #eef0f1; padding: 0 2px;
}
.dtitle { display: flex; align-items: center; height: 21px; margin: 0 -2px; padding: 0 8px 0 0; background: linear-gradient(#f7f8f8, #dde1e1); border-bottom: 1px solid #c0c6c8; }
.dtitle h2 { flex: 1; text-align: center; font-size: 13px; line-height: 18px; color: #555; }
.dtabs { display: flex; align-items: flex-end; height: 22px; position: relative; z-index: 1; margin-bottom: -1px; }
.dtabs button { height: 20px; width: 39px; font-size: 13px; font-weight: bold; color: #777; border: 1px solid #c6cacd; border-left-width: 0; }
.dtabs .on { width: 38px; height: 21px; background: #fcfcfc; color: #222; border-left-width: 1px; border-bottom-color: #fcfcfc; }
.dtabs .on span { border: 1px dotted #222; line-height: 15px; }
.dbody { background: #fcfcfc; border: 1px solid #c0c4c7; }
.line { display: flex; align-items: center; justify-content: space-between; }
.sec { padding: 6px 7px 0 11px; }
.sec + .sec { border-top: 1px solid #d5d8da; }
.geo { height: 52px; }
.radio, .check { display: flex; align-items: center; height: 18px; }
input[type=radio] { appearance: none; flex: none; width: 13px; height: 13px; margin-right: 7px; border: 1px solid #999; border-radius: 50%; background: #fff; }
input[type=radio]:checked { background: radial-gradient(#222 3px, #fff 4px); }
input[type=text] { min-width: 0; outline: 0; border: 1px solid #bfc3c6; font: 10px/16px "DejaVu Sans Mono", "Noto Sans CJK SC", monospace; padding: 0 5px; background: #fff; }
.sec .quilt { width: 196px; height: 18px; background: #f9f7fe; border-color: #d5d5dc; }
.cs { height: 59px; padding: 14px 10px 0 11px; }
.cs .line label { margin-top: -6px; }
.sec .csin { width: 213px; height: 19px; background: #efeaf7; border-color: #aaa; padding-left: 17px; font: 12px/16px "Noto Sans CJK SC", sans-serif; }
.check { margin: 1px 0 0 64px; height: 20px; }
input[type=checkbox] { appearance: none; position: relative; flex: none; width: 13px; height: 13px; margin-right: 6px; border: 1px solid #888; background: #fff; }
input[type=checkbox]:checked::after { content: ""; position: absolute; left: 3px; top: -3px; width: 4px; height: 9px; border: solid #111; border-width: 0 3px 3px 0; transform: rotate(42deg); }
.res { padding: 13px 7px 4px 8px; }
.combo { display: flex; height: 19px; border: 1px solid #aeb2b5; }
.combo input[type=text] { flex: 1; border: 0; padding: 0 3px; }
.dens .combo { width: 189px; } .prec .combo { width: 219px; }
.dens label { margin-top: -6px; }
.prec { margin-top: 9px; }
.out { margin-top: 26px; padding: 0 8px 0 3px; align-items: flex-end; }
.out > svg { margin-bottom: 6px; }
.report { width: 237px; height: 107px; border: 1px solid #aaa; padding: 1px; display: grid; grid-template: 1fr 18px / 1fr 18px; background: #fcfcfc; }
.report pre { background: #f3f4f4; font: 12px/12px "Liberation Mono", "Noto Sans CJK SC", monospace; padding: 3px 0 0 2px; overflow: hidden; }
.report .m { line-height: 1px; }
.vbar, .hbar { display: flex; background: #eceef0; border: 1px solid #d2d5d7; }
.vbar { flex-direction: column; justify-content: space-between; }
.vbar button, .hbar button { flex: none; width: 16px; height: 16px; background: #f8f8f8; border: 1px solid #ccc; }
.vbar .caret, .report .vbar .up { border-left-width: 4px; border-right-width: 4px; }
.thumb { border: 1px solid #ccc; background: #fafafa; }
.vbar .thumb { height: 16px; margin: 1px 0 auto; background: repeating-linear-gradient(#fafafa 0 2px, #bbb 2px 3px) content-box #fafafa; padding: 2px 3px; }
.hbar .thumb { width: 109px; margin-right: auto; padding: 4px 48px; background: repeating-linear-gradient(90deg, #fafafa 0 2px, #bbb 2px 3px) content-box, linear-gradient(#fff, #e9ebec); }
.name { margin-top: 8px; gap: 4px; }
.name .pick { width: 64px; }
.name input[type=text] { flex: 1; height: 20px; color: #888; padding: 0 2px; font: 10px/18px "Liberation Mono", monospace; }
.dbtns { display: flex; justify-content: space-between; padding: 5px 17px 4px 18px; }
.dbtns button { width: 40px; height: 28px; border: 1px solid #bbbfc2; border-radius: 3px; background: linear-gradient(#fdfdfd, #e9ebec); }
.dbtns .lit { background: linear-gradient(#a4daf9, #b9e4fc); border-color: #94cdee; }
```
